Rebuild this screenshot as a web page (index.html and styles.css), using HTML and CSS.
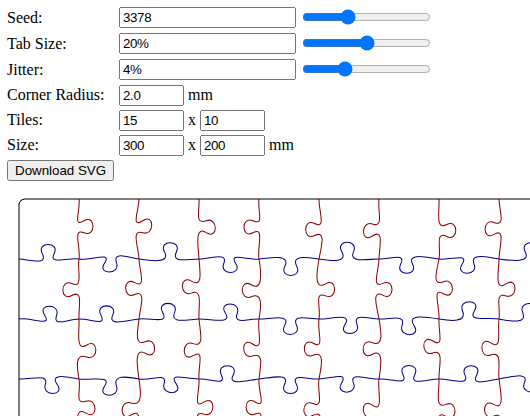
FILE: index.html
```html
<!DOCTYPE html>
<html lang="en">
<head>
<meta charset="utf-8">
<title>Jigsaw Puzzle Generator</title>
<link rel="stylesheet" href="styles.css">
</head>
<body>
<div class="controls">
<div class="row tall"><span class="label">Seed:</span><input class="wide" type="text" value="3378"><input class="slider" id="seed" type="range" value="3378" min="0" max="9999"></div>
<div class="row tall"><span class="label">Tab Size:</span><input class="wide" type="text" value="20%"><input class="slider" id="tabsize" type="range" value="20" min="10" max="30" step="0.1"></div>
<div class="row tall"><span class="label">Jitter:</span><input class="wide" type="text" value="4%"><input class="slider" id="jitter" type="range" value="4" min="0" max="13" step="0.1"></div>
<div class="row"><span class="label">Corner Radius:</span><input class="small" id="radius" type="text" value="2.0"><span class="unit">mm</span></div>
<div class="row"><span class="label">Tiles:</span><input class="small" id="xn" type="text" value="15"><span class="unit">x</span><input class="small" id="yn" type="text" value="10"></div>
<div class="row"><span class="label">Size:</span><input class="small" id="width" type="text" value="300"><span class="unit">x</span><input class="small" id="height" type="text" value="200"><span class="unit">mm</span></div>
<div class="row"><button class="download" type="button">Download SVG</button></div>
</div>
<div class="preview">
<svg class="puzzle" width="930" height="630" viewBox="-5 -5 310 210">
<path id="rows" class="rows"/>
<path id="columns" class="columns"/>
<path id="border" class="border"/>
</svg>
</div>
<script src="puzzle.js"></script>
</body>
</html>
```
FILE: styles.css
```css
html,
body {
  height: 100%;
  margin: 0;
  overflow: hidden;
}

body {
  display: flex;
  flex-direction: column;
  color: #000;
  background: #fff;
  font: 16px/18px "Liberation Serif", "Times New Roman", serif;
}

.controls {
  flex: none;
  padding: 7px 0 0 7px;
  white-space: nowrap;
}

.row {
  display: flex;
  align-items: flex-start;
  height: 25px;
}

.row.tall {
  height: 26px;
}

.label {
  width: 112px;
  padding-top: 1px;
}

.tall .label {
  padding-top: 2px;
}

.unit {
  padding: 1px 4px 0;
}

.wide,
.small,
.download {
  height: 21px;
  box-sizing: border-box;
  margin: 0;
  font: 13.333px "Liberation Sans", Arial, sans-serif;
}

.wide,
.small {
  letter-spacing: -0.35px;
}

.wide {
  width: 177px;
}

.small {
  width: 65px;
}

.slider {
  width: 129px;
  height: 16px;
  margin: 2px 0 0 6px;
}

.preview {
  flex: 1;
  min-height: 0;
  overflow: hidden;
  padding: 0 0 0 4px;
}

.puzzle {
  display: block;
  margin-top: -1px;
}

.rows,
.columns,
.border {
  fill: none;
  stroke-width: 0.34;
}

.rows {
  stroke: darkblue;
}

.columns {
  stroke: darkred;
}

.border {
  stroke: black;
}
```
FILE: puzzle.js
```js
const value = (id) => parseFloat(document.getElementById(id).value);

let seed = value("seed");
const t = value("tabsize") / 200;
const jitter = value("jitter") / 100;
const xn = value("xn");
const yn = value("yn");
const width = value("width");
const height = value("height");
const radius = value("radius");

let a, b, c, d, e, flip;

function random() {
  const x = Math.sin(seed) * 10000;
  seed += 1;
  return x - Math.floor(x);
}

function uniform(min, max) {
  return min + random() * (max - min);
}

function next() {
  const previous = flip;
  flip = random() > 0.5;
  a = flip === previous ? -e : e;
  b = uniform(-jitter, jitter);
  c = uniform(-jitter, jitter);
  d = uniform(-jitter, jitter);
  e = uniform(-jitter, jitter);
}

function first() {
  e = uniform(-jitter, jitter);
  next();
}

// Builds every cut running in one direction: each tab is three cubic curves.
function cuts(vertical) {
  const along = vertical ? yn : xn;
  const lines = vertical ? xn : yn;
  const length = vertical ? height / yn : width / xn;
  const depth = vertical ? width / xn : height / yn;
  let path = "";
  for (let line = 1; line < lines; line++) {
    first();
    path += vertical ? `M${depth * line} 0` : `M0 ${depth * line}`;
    for (let i = 0; i < along; i++) {
      const points = [
        [0.2, a], [0.5 + b + d, -t + c], [0.5 - t + b, t + c],
        [0.5 - 2 * t + b - d, 3 * t + c], [0.5 + 2 * t + b - d, 3 * t + c], [0.5 + t + b, t + c],
        [0.5 + b + d, -t + c], [0.8, e], [1, 0]
      ];
      path += "C" + points.map(([l, w]) => {
        const p = length * (i + l);
        const q = depth * (line + w * (flip ? -1 : 1));
        return vertical ? `${q} ${p}` : `${p} ${q}`;
      }).join(" ");
      next();
    }
  }
  return path;
}

document.getElementById("rows").setAttribute("d", cuts(false));
document.getElementById("columns").setAttribute("d", cuts(true));
document.getElementById("border").setAttribute("d",
  `M${radius} 0H${width - radius}A${radius} ${radius} 0 0 1 ${width} ${radius}` +
  `V${height - radius}A${radius} ${radius} 0 0 1 ${width - radius} ${height}` +
  `H${radius}A${radius} ${radius} 0 0 1 0 ${height - radius}` +
  `V${radius}A${radius} ${radius} 0 0 1 ${radius} 0Z`);
```
